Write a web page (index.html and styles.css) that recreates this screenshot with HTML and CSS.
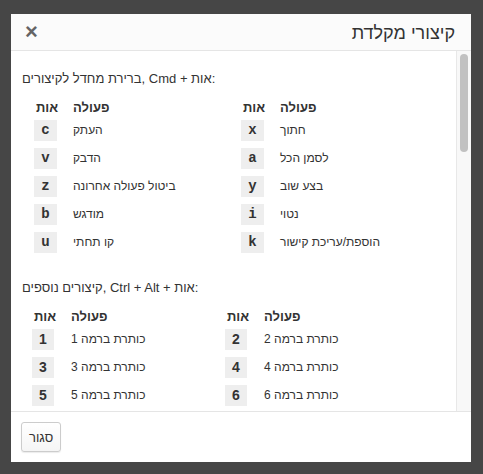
FILE: index.html
```html
<!DOCTYPE html>
<html lang="he">
<head>
<meta charset="utf-8">
<title>קיצורי מקלדת</title>
<link rel="stylesheet" href="styles.css">
</head>
<body>
<div class="overlay">
  <div class="dialog">
    <div class="dlg-header" dir="rtl">
      <h4 class="dlg-title">קיצורי מקלדת</h4>
      <button class="dlg-close" type="button">×</button>
    </div>
    <div class="dlg-body">
      <div class="dlg-content">
        <div class="section">
          <p class="sec-title">ברירת מחדל לקיצורים, Cmd + אות:</p>
          <div class="tables tables-a">
            <div class="ktable">
              <div class="krow khead"><span class="kcol">אות</span><span>פעולה</span></div>
              <div class="krow"><span class="kbd">c</span><span>העתק</span></div>
              <div class="krow"><span class="kbd">v</span><span>הדבק</span></div>
              <div class="krow"><span class="kbd">z</span><span>ביטול פעולה אחרונה</span></div>
              <div class="krow"><span class="kbd">b</span><span>מודגש</span></div>
              <div class="krow"><span class="kbd">u</span><span>קו תחתי</span></div>
            </div>
            <div class="ktable">
              <div class="krow khead"><span class="kcol">אות</span><span>פעולה</span></div>
              <div class="krow"><span class="kbd">x</span><span>חתוך</span></div>
              <div class="krow"><span class="kbd">a</span><span>לסמן הכל</span></div>
              <div class="krow"><span class="kbd">y</span><span>בצע שוב</span></div>
              <div class="krow"><span class="kbd">i</span><span>נטוי</span></div>
              <div class="krow"><span class="kbd">k</span><span>הוספת/עריכת קישור</span></div>
            </div>
          </div>
        </div>
        <div class="section section-b">
          <p class="sec-title">קיצורים נוספים, Ctrl + Alt + אות:</p>
          <div class="tables tables-b">
            <div class="ktable">
              <div class="krow khead"><span class="kcol">אות</span><span>פעולה</span></div>
              <div class="krow"><span class="kbd num">1</span><span>כותרת ברמה 1</span></div>
              <div class="krow"><span class="kbd num">3</span><span>כותרת ברמה 3</span></div>
              <div class="krow"><span class="kbd num">5</span><span>כותרת ברמה 5</span></div>
            </div>
            <div class="ktable">
              <div class="krow khead"><span class="kcol">אות</span><span>פעולה</span></div>
              <div class="krow"><span class="kbd num">2</span><span>כותרת ברמה 2</span></div>
              <div class="krow"><span class="kbd num">4</span><span>כותרת ברמה 4</span></div>
              <div class="krow"><span class="kbd num">6</span><span>כותרת ברמה 6</span></div>
            </div>
          </div>
        </div>
      </div>
      <div class="scrollbar"><div class="thumb"></div></div>
    </div>
    <div class="dlg-footer">
      <button class="btn" type="button">סגור</button>
    </div>
  </div>
</div>
</body>
</html>
```
FILE: styles.css
```css
html, body {
  margin: 0;
  padding: 0;
  height: 100%;
}
body {
  background: #464646;
  font-family: "Liberation Sans", Arial, sans-serif;
  font-size: 14px;
  color: #333;
  overflow: hidden;
}
.overlay {
  padding: 14px 0 0 11px;
}
.dialog {
  width: 460px;
  height: 448px;
  background: #fff;
  display: flex;
  flex-direction: column;
}
.dlg-header {
  height: 36px;
  flex: none;
  background: #fbfbfb;
  border-bottom: 1px solid #e5e5e5;
  display: flex;
  align-items: center;
  justify-content: space-between;
  padding: 0 16px 0 14px;
}
.dlg-title {
  margin: 0;
  font-size: 18px;
  font-weight: normal;
  line-height: 20px;
  color: #333;
  padding-top: 1px;
}
.dlg-close {
  border: 0;
  background: none;
  padding: 0;
  margin: 0;
  font-family: "Liberation Sans", Arial, sans-serif;
  font-size: 22px;
  font-weight: bold;
  line-height: 1;
  color: #000;
  opacity: 0.6;
  cursor: pointer;
}
.dlg-body {
  height: 360px;
  flex: none;
  display: flex;
}
.dlg-content {
  flex: 1;
  overflow: hidden;
  padding: 18px 0 0 11px;
  direction: ltr;
}
.scrollbar {
  flex: none;
  background: #f8f8f8;
  border-left: 1px solid #e8e8e8;
  padding: 3px 3px 0 3px;
  box-sizing: border-box;
  width: 15px;
}
.thumb {
  width: 8px;
  height: 98px;
  background: #c1c1c1;
  border-radius: 4px;
}
.sec-title {
  margin: 0;
  line-height: 20px;
  font-size: 13px;
}
.section-b {
  margin-top: 25px;
}
.tables {
  display: grid;
  margin-top: 9px;
}
.tables-a {
  padding-left: 12px;
  grid-template-columns: 207px 1fr;
}
.tables-b {
  padding-left: 10px;
  grid-template-columns: 193px 1fr;
}
.krow {
  display: grid;
  grid-template-columns: 39px 1fr;
  align-items: center;
  margin-top: 7px;
  line-height: 21px;
  font-size: 12px;
}
.khead {
  margin-top: 0;
  margin-bottom: -5px;
  font-weight: bold;
  line-height: 20px;
  font-size: 13px;
}
.kcol {
  padding-left: 2px;
}
.kbd {
  width: 23px;
  height: 21px;
  background: #eee;
  text-align: center;
  font-family: "Liberation Mono", "Courier New", monospace;
  font-weight: bold;
  font-size: 14px;
  color: #333;
}
.tables-b .kbd {
  width: 22px;
}
.kbd.num {
  font-family: "Liberation Sans", Arial, sans-serif;
}
.dlg-footer {
  flex: 1;
  border-top: 1px solid #e5e5e5;
  padding: 10px;
  display: flex;
  align-items: flex-start;
}
.btn {
  height: 30px;
  padding: 0 7px;
  border: 1px solid #ccc;
  border-radius: 3px;
  background: linear-gradient(#fff, #f5f5f5);
  box-shadow: 0 1px 1px rgba(0,0,0,0.08);
  font-family: "Liberation Sans", Arial, sans-serif;
  font-size: 13px;
  color: #333;
  cursor: pointer;
}
```
